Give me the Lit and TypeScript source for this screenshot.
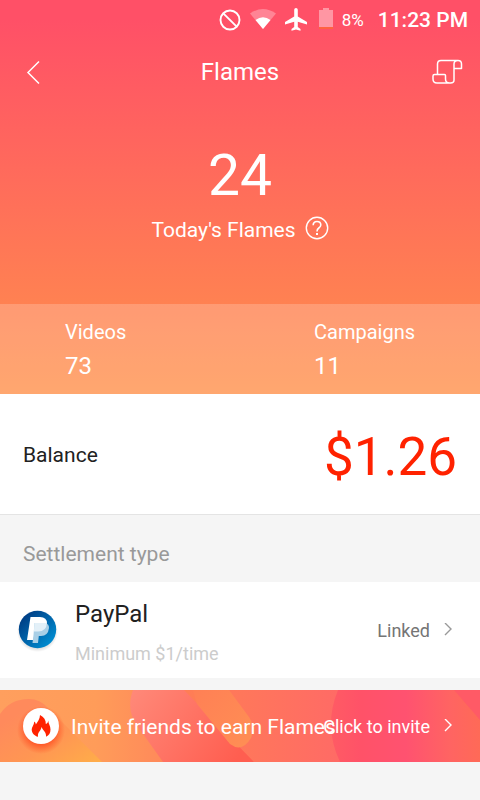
import { LitElement, html, css, svg } from "lit";
import { customElement, property } from "lit/decorators.js";

const chevron = svg`<path d="M2 0L8 6L2 12" fill="none" stroke="currentColor" stroke-width="1.4"/>`;

@customElement("status-bar")
class StatusBar extends LitElement {
  static styles = css`
    :host { display: flex; justify-content: flex-end; align-items: center; height: 40px; padding-right: 12px; box-sizing: border-box; }
    svg { display: block; flex: none; }
    .block, .wifi, .battery { margin-right: 9px; }
    .plane { margin-right: 12px; }
    .level { font-size: 17px; margin-right: 14px; }
    .time { font-size: 21px; font-weight: 500; }
  `;
  render() {
    return html`
      <svg class="block" width="22" height="22" viewBox="0 0 22 22" fill="none" stroke="#fff" stroke-width="1.9"><circle cx="11" cy="11" r="9.5"/><path d="M4.3 4.3L17.7 17.7"/></svg>
      <svg class="wifi" width="26" height="22" viewBox="0 0 26 22" fill="#fff"><path opacity=".3" d="M0 4.500Q13-4.500 26 4.500L13 20Z"/><path d="M5.500 11Q13 5.500 20.500 11L13 20Z"/></svg>
      <svg class="plane" width="22" height="24" viewBox="0 0 22 24" fill="#fff"><path d="M11 0C12 0 12.800.8 12.800 2V8.500L22 14V16.500L12.800 13.800V19L15.500 21V22.800L11 21.600L6.500 22.800V21L9.200 19V13.800L0 16.500V14L9.200 8.500V2C9.200.8 10 0 11 0Z"/></svg>
      <svg class="battery" width="14" height="24" viewBox="0 0 14 24"><path fill="#fff" opacity=".4" d="M4 0H10V2H14V20H0V2H4Z"/><path fill="#ff6240" d="M0 19H14V21H0Z"/></svg>
      <span class="level">8%</span><span class="time">11:23 PM</span>`;
  }
}

@customElement("stat-item")
class StatItem extends LitElement {
  @property() label = "";
  @property() value = "";
  static styles = css`
    :host { display: block; }
    .label { font-size: 20px; line-height: 28px; }
    .value { font-size: 24px; line-height: 40px; }
  `;
  render() {
    return html`<div class="label">${this.label}</div><div class="value">${this.value}</div>`;
  }
}

@customElement("app-root")
class AppRoot extends LitElement {
  static styles = css`
    :host { display: block; min-height: 100vh; background: #f5f5f5; font-family: Roboto, sans-serif; color: #212121; overflow-x: hidden; }
    * { box-sizing: border-box; }
    svg { display: block; flex: none; }
    button { border: 0; padding: 0; background: none; color: inherit; font: inherit; cursor: pointer; }
    a { color: inherit; text-decoration: none; }
    h1, h2, p { margin: 0; font-weight: 400; }
    .hero { background: linear-gradient(#ff5067 5%, #ff914b); color: #fff; }
    .bar { display: grid; grid-template-columns: 1fr auto 1fr; align-items: center; height: 64px; padding: 0 16px; }
    .bar .log { justify-self: end; }
    .bar .back { justify-self: start; padding-left: 8px; }
    .title { font-size: 24px; }
    .today { height: 200px; padding-top: 36px; text-align: center; }
    .count { font-size: 57px; line-height: 72px; }
    .caption { display: flex; justify-content: center; align-items: center; gap: 9px; font-size: 21px; line-height: 36px; }
    .caption svg { margin-bottom: 4px; }
    .stats { display: grid; grid-template-columns: 60% 1fr; height: 90px; padding: 14px 0 0 65px; background: rgba(255, 255, 255, .2); }
    .balance { display: flex; justify-content: space-between; align-items: center; height: 121px; padding: 2px 23px 0; background: #fff; border-bottom: 1px solid #e4e4e4; font-size: 21px; }
    .amount { font-size: 53px; line-height: 64px; padding-top: 4px; color: #ff2200; }
    .section { font-size: 21px; line-height: 68px; padding: 5px 23px 0; height: 67px; color: #999; }
    .method { display: flex; align-items: center; height: 96px; padding: 0 27px 0 16px; background: #fff; }
    .method .logo { margin-right: 16px; }
    .info { flex: 1; padding-top: 4px; }
    .name { font-size: 24px; line-height: 36px; }
    .limit { font-size: 18px; line-height: 28px; padding-top: 8px; color: #ccc; }
    .linked { display: flex; align-items: center; gap: 13px; font-size: 18px; color: #757575; }
    .linked svg { color: #999; }
    .banner { position: relative; display: flex; align-items: center; height: 72px; margin-top: 12px; padding: 0 27px 0 14px; color: #fff; overflow: hidden; background: #ff7a62; }
    .art { position: absolute; inset: 0; width: 100%; height: 100%; }
    .flame, .invite, .click { position: relative; }
    .flame { margin-right: 3px; }
    .invite { flex: 1; min-width: 0; font-size: 21px; line-height: 28px; padding-top: 2px; white-space: nowrap; }
    .click { display: flex; align-items: center; gap: 13px; font-size: 18px; white-space: nowrap; }
  `;
  render() {
    return html`
      <header class="hero">
        <status-bar></status-bar>
        <nav class="bar">
          <button class="back" aria-label="Back"><svg width="18" height="24" viewBox="0 0 18 24" fill="none" stroke="#fff" stroke-width="1.5"><path d="M15 1.500L4 12.500L15 23.500"/></svg></button>
          <h1 class="title">Flames</h1>
          <button class="log" aria-label="History"><svg width="32" height="26" viewBox="0 0 32 26" fill="none" stroke="#fff" stroke-width="1.5" stroke-linejoin="round"><path d="M5.500 15V5Q5.500 1.500 9 1.500H26Q29.500 1.500 29.500 5V9.500H22V21Q22 24 18.500 24H5Q1 24 1 20V17Q1 15.500 2.500 15.500H12.500Q13.500 15.500 13.500 16.500V20Q13.500 24 17.500 24M22 9.500V5Q22 1.500 26 1.500"/></svg></button>
        </nav>
        <section class="today">
          <div class="count">24</div>
          <div class="caption"><span>Today's Flames</span>
            <button aria-label="Help"><svg width="24" height="24" viewBox="0 0 24 24" fill="none" stroke="#fff" stroke-width="1.4"><circle cx="12" cy="12" r="10.700"/><path d="M8.200 9.200Q8.200 5.500 12 5.500T15.800 9Q15.800 10.500 13.800 12Q12 13.300 12 15.500" stroke-width="1.6"/><path d="M12 17V19" stroke-width="2"/></svg></button>
          </div>
        </section>
        <section class="stats">
          <stat-item label="Videos" value="73"></stat-item>
          <stat-item label="Campaigns" value="11"></stat-item>
        </section>
      </header>
      <section class="balance"><span>Balance</span><span class="amount">$1.26</span></section>
      <h2 class="section">Settlement type</h2>
      <a class="method" href="#paypal">
        <svg class="logo" width="43" height="44" viewBox="0 0 43 44">
          <defs>
            <linearGradient id="pp" x1="0" y1="0" x2="1" y2="1"><stop offset=".15" stop-color="#003f86"/><stop offset=".9" stop-color="#0090d4"/></linearGradient>
            <radialGradient id="ps"><stop offset=".8" stop-color="#000" stop-opacity=".14"/><stop offset="1" stop-color="#000" stop-opacity="0"/></radialGradient>
          </defs>
          <circle cx="21.500" cy="23.500" r="20.500" fill="url(#ps)"/><circle cx="21.500" cy="21.500" r="18.700" fill="url(#pp)"/>
          <path d="M14.500 9H24Q31 9 31 15.500Q30 23.500 22 23.500H18.800L17.500 32H11Z" fill="#fff"/>
          <path d="M18.500 15H29Q33.300 16 33 20Q32 28 25 28H22.800L22 35H16.500L17.500 27Z" fill="#a9cfe6"/>
          <path d="M18.500 15H30.900Q30.500 23.500 22 23.500H17.900Z" fill="#e3f0f8"/>
        </svg>
        <div class="info"><p class="name">PayPal</p><p class="limit">Minimum $1/time</p></div>
        <span class="linked">Linked <svg width="10" height="14" viewBox="0 0 10 14">${chevron}</svg></span>
      </a>
      <a class="banner" href="#invite">
        <svg class="art" viewBox="0 0 480 72" preserveAspectRatio="none" aria-hidden="true">
          <defs>
            <linearGradient id="b1" gradientUnits="userSpaceOnUse" x1="0" y1="0" x2="160" y2="0"><stop stop-color="#ff9f5e"/><stop offset=".6" stop-color="#ff9c59"/><stop offset="1" stop-color="#ff8a5a"/></linearGradient>
            <linearGradient id="b2" x1="0" y1="0" x2="1" y2="1"><stop offset=".2" stop-color="#ff8a5c"/><stop offset=".6" stop-color="#ff9653"/><stop offset="1" stop-color="#ffae49"/></linearGradient>
            <linearGradient id="b3" gradientUnits="userSpaceOnUse" x1="135" y1="0" x2="235" y2="72"><stop stop-color="#ff8878"/><stop offset="1" stop-color="#ff5e50"/></linearGradient>
            <linearGradient id="b4"><stop stop-color="#ff7e55"/><stop offset="1" stop-color="#ff6a66"/></linearGradient>
            <linearGradient id="b5"><stop stop-color="#ff5b64"/><stop offset=".2" stop-color="#ff5268"/><stop offset=".5" stop-color="#ff5270"/><stop offset=".8" stop-color="#ff6462"/><stop offset="1" stop-color="#ff6a57"/></linearGradient>
            <linearGradient id="b6" x1="0" y1="0" x2="1" y2="1"><stop stop-color="#ff8055"/><stop offset="1" stop-color="#ff8f54"/></linearGradient>
          </defs>
          <path fill="url(#b1)" d="M0 0H200V72H0Z"/>
          <path fill="url(#b2)" d="M0 24Q10 9 29 9Q40 9 48 18L102 72H0Z"/>
          <path fill="url(#b3)" d="M133 0H230L254 72H163L136 34Q126 18 133 0Z"/>
          <path fill="url(#b4)" d="M184 0H345V72H254Z"/>
          <path fill="url(#b6)" d="M193 0H229L249 27Q256 37 251 48Q242 63 230 54L197 14Z"/>
          <path fill="url(#b5)" d="M338 0H480V72H340Q323 36 338 0Z"/>
          <path fill="#ff5a66" d="M454 0H480V30Z"/>
        </svg>
        <svg class="flame" width="54" height="60" viewBox="0 0 54 60">
          <defs><radialGradient id="fs"><stop offset=".55" stop-color="#ff3c14" stop-opacity=".75"/><stop offset="1" stop-color="#ff4a20" stop-opacity="0"/></radialGradient></defs>
          <circle cx="27" cy="34" r="24" fill="url(#fs)"/><circle cx="27" cy="30" r="18" fill="#fff"/>
          <path fill="#ff2200" d="M26 19C30 21 32 24 31.800 28C33.500 27.500 34 26.500 34.200 24.500C34.500 28 36.500 30 36.500 33.500C36.500 37 35 39.500 32 40.800C32.500 36 29.500 35.500 27.500 31C26.500 36 23.500 35.500 24 40.800C20.500 40 17.700 37 17.700 33.500C17.700 31 20 29 20.300 25.500C21.500 26.500 21.800 27.500 21.800 28.500C23.500 26 26 23 26 19Z"/>
        </svg>
        <span class="invite">Invite friends to earn Flames</span>
        <span class="click">Click to invite <svg width="10" height="14" viewBox="0 0 10 14">${chevron}</svg></span>
      </a>`;
  }
}
